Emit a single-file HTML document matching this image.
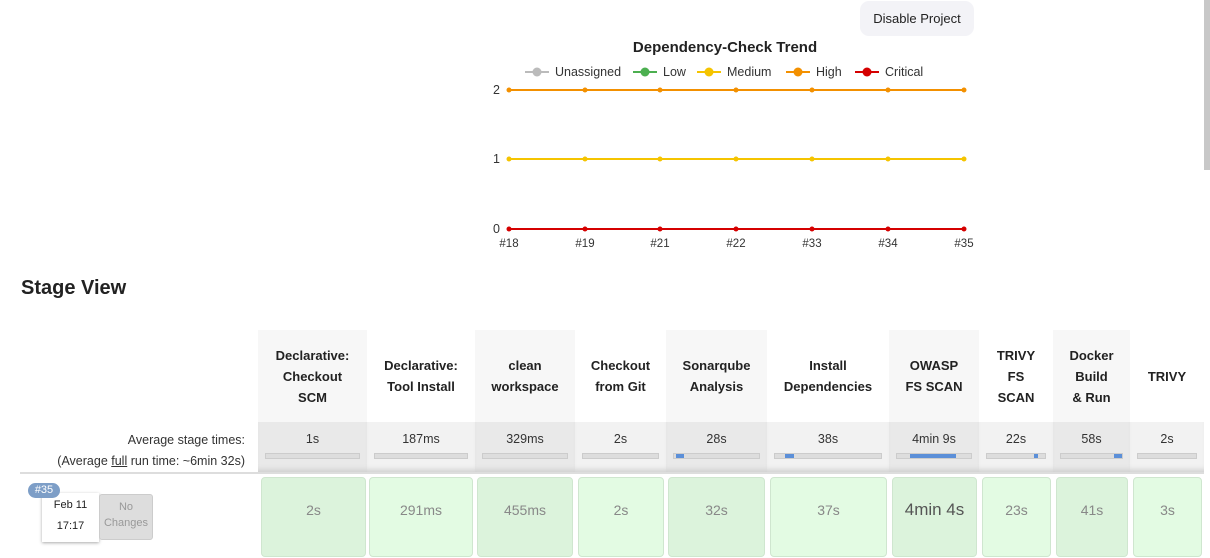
<!DOCTYPE html><html><head><style>
body{margin:0;width:1210px;height:558px;position:relative;overflow:hidden;background:#fff;font-family:"Liberation Sans",sans-serif;color:#222}
.a{position:absolute}
.h{position:absolute;top:330px;height:92px;display:flex;align-items:center;justify-content:center;text-align:center;font-weight:bold;font-size:13px;line-height:21px;color:#222}
.v{position:absolute;top:422px;height:50px;font-size:12.5px;text-align:center;color:#333;box-shadow:inset 0 -6px 6px -4px #ccc}
.v span{display:block;margin-top:10px}
.bar{position:absolute;left:7px;right:7px;top:31px;height:4px;background:#ddd;border:1px solid #ccc}
.bb{position:absolute;top:0;height:4px;background:#5b8fd8}
.c{position:absolute;top:477px;height:80px;border:1px solid #cfe6cf;border-radius:4px;display:flex;align-items:center;justify-content:center;font-size:14px;color:#888;box-sizing:border-box;padding-bottom:14px}
</style></head><body>
<div class="a" style="right:0;top:0;width:6px;height:170px;background:#c8c8c8"></div>
<div class="a" style="left:860px;top:1px;width:114px;height:35px;background:#f3f3f7;border-radius:9px;font-size:13px;line-height:35px;text-align:center">Disable Project</div>
<div class="a" style="left:560px;top:39px;width:330px;text-align:center;font-weight:bold;font-size:15px">Dependency-Check Trend</div>
<svg class="a" style="left:0;top:0" width="1210" height="260" font-family="Liberation Sans" font-size="12.5">
<g stroke-width="2">
<line x1="525" y1="72" x2="549" y2="72" stroke="#bbb"/><circle cx="537" cy="72" r="4.5" fill="#bbb"/>
<line x1="633" y1="72" x2="657" y2="72" stroke="#4caf50"/><circle cx="645" cy="72" r="4.5" fill="#4caf50"/>
<line x1="697" y1="72" x2="721" y2="72" stroke="#f5c400"/><circle cx="709" cy="72" r="4.5" fill="#f5c400"/>
<line x1="786" y1="72" x2="810" y2="72" stroke="#f39000"/><circle cx="798" cy="72" r="4.5" fill="#f39000"/>
<line x1="855" y1="72" x2="879" y2="72" stroke="#d50000"/><circle cx="867" cy="72" r="4.5" fill="#d50000"/>
</g>
<g fill="#333"><text x="555" y="76">Unassigned</text><text x="663" y="76">Low</text><text x="727" y="76">Medium</text><text x="816" y="76">High</text><text x="885" y="76">Critical</text>
<text x="493" y="94">2</text><text x="493" y="163">1</text><text x="493" y="233">0</text>
<g font-size="11.5" text-anchor="middle"><text x="509" y="247">#18</text><text x="585" y="247">#19</text><text x="660" y="247">#21</text><text x="736" y="247">#22</text><text x="812" y="247">#33</text><text x="888" y="247">#34</text><text x="964" y="247">#35</text></g></g>
<line x1="509" y1="90" x2="964" y2="90" stroke="#f39000" stroke-width="2"/>
<line x1="509" y1="159" x2="964" y2="159" stroke="#f5c400" stroke-width="2"/>
<line x1="509" y1="229" x2="964" y2="229" stroke="#d50000" stroke-width="2"/>
<g><g fill="#f39000"><circle cx="509" cy="90" r="2.5"/><circle cx="585" cy="90" r="2.5"/><circle cx="660" cy="90" r="2.5"/><circle cx="736" cy="90" r="2.5"/><circle cx="812" cy="90" r="2.5"/><circle cx="888" cy="90" r="2.5"/><circle cx="964" cy="90" r="2.5"/></g>
<g fill="#f5c400"><circle cx="509" cy="159" r="2.5"/><circle cx="585" cy="159" r="2.5"/><circle cx="660" cy="159" r="2.5"/><circle cx="736" cy="159" r="2.5"/><circle cx="812" cy="159" r="2.5"/><circle cx="888" cy="159" r="2.5"/><circle cx="964" cy="159" r="2.5"/></g>
<g fill="#d50000"><circle cx="509" cy="229" r="2.5"/><circle cx="585" cy="229" r="2.5"/><circle cx="660" cy="229" r="2.5"/><circle cx="736" cy="229" r="2.5"/><circle cx="812" cy="229" r="2.5"/><circle cx="888" cy="229" r="2.5"/><circle cx="964" cy="229" r="2.5"/></g></g>
</svg>
<div class="a" style="left:21px;top:277px;font-size:20px;font-weight:bold">Stage View</div>
<div class="a" style="left:20px;top:430px;width:225px;text-align:right;font-size:12.5px;line-height:21px;color:#333">Average stage times:<br>(Average <u>full</u> run time: ~6min 32s)</div>
<div class="a" style="left:20px;top:472px;width:1184px;height:2px;background:#ddd"></div>
<div class="a" style="left:28px;top:483px;width:32px;height:15px;background:#7d9ec7;border-radius:8px;color:#fff;font-size:11px;line-height:15px;text-align:center;z-index:2">#35</div>
<div class="a" style="left:42px;top:493px;width:57px;height:47px;background:#fff;box-shadow:0 1px 3px #aaa;font-size:11px;text-align:center;line-height:21px;padding-top:2px">Feb 11<br>17:17</div>
<div class="a" style="left:99px;top:494px;width:54px;height:46px;background:#ddd;border:1px solid #ccc;border-radius:3px;box-sizing:border-box;font-size:11px;color:#999;text-align:center;line-height:16px;padding-top:4px">No<br>Changes</div>

<div class="h" style="left:258px;width:109px;background:#f7f7f7">Declarative:<br>Checkout<br>SCM</div>
<div class="h" style="left:367px;width:108px">Declarative:<br>Tool Install</div>
<div class="h" style="left:475px;width:100px;background:#f7f7f7">clean<br>workspace</div>
<div class="h" style="left:575px;width:91px">Checkout<br>from Git</div>
<div class="h" style="left:666px;width:101px;background:#f7f7f7">Sonarqube<br>Analysis</div>
<div class="h" style="left:767px;width:122px">Install<br>Dependencies</div>
<div class="h" style="left:889px;width:90px;background:#f7f7f7">OWASP<br>FS SCAN</div>
<div class="h" style="left:979px;width:74px">TRIVY<br>FS<br>SCAN</div>
<div class="h" style="left:1053px;width:77px;background:#f7f7f7">Docker<br>Build<br>&amp; Run</div>
<div class="h" style="left:1130px;width:74px">TRIVY</div>

<div class="v" style="left:258px;width:109px;background:#e9e9e9"><span>1s</span><div class="bar"></div></div>
<div class="v" style="left:367px;width:108px;background:#f2f2f2"><span>187ms</span><div class="bar"></div></div>
<div class="v" style="left:475px;width:100px;background:#e9e9e9"><span>329ms</span><div class="bar"></div></div>
<div class="v" style="left:575px;width:91px;background:#f2f2f2"><span>2s</span><div class="bar"></div></div>
<div class="v" style="left:666px;width:101px;background:#e9e9e9"><span>28s</span><div class="bar"><div class="bb" style="left:2px;width:8px"></div></div></div>
<div class="v" style="left:767px;width:122px;background:#f2f2f2"><span>38s</span><div class="bar"><div class="bb" style="left:10px;width:9px"></div></div></div>
<div class="v" style="left:889px;width:90px;background:#e9e9e9"><span>4min 9s</span><div class="bar"><div class="bb" style="left:13px;width:46px"></div></div></div>
<div class="v" style="left:979px;width:74px;background:#f2f2f2"><span>22s</span><div class="bar"><div class="bb" style="left:47px;width:4px"></div></div></div>
<div class="v" style="left:1053px;width:77px;background:#e9e9e9"><span>58s</span><div class="bar"><div class="bb" style="left:53px;width:8px"></div></div></div>
<div class="v" style="left:1130px;width:74px;background:#f2f2f2"><span>2s</span><div class="bar"></div></div>

<div class="c" style="left:261px;width:105px;background:#dcf3dc">2s</div>
<div class="c" style="left:369px;width:104px;background:#e3fbe3">291ms</div>
<div class="c" style="left:477px;width:96px;background:#dcf3dc">455ms</div>
<div class="c" style="left:578px;width:86px;background:#e3fbe3">2s</div>
<div class="c" style="left:668px;width:97px;background:#dcf3dc">32s</div>
<div class="c" style="left:770px;width:117px;background:#e3fbe3">37s</div>
<div class="c" style="left:892px;width:85px;background:#dcf3dc;font-size:17px;color:#555">4min 4s</div>
<div class="c" style="left:982px;width:69px;background:#e3fbe3">23s</div>
<div class="c" style="left:1056px;width:72px;background:#dcf3dc">41s</div>
<div class="c" style="left:1133px;width:69px;background:#e3fbe3">3s</div>
</body></html>
